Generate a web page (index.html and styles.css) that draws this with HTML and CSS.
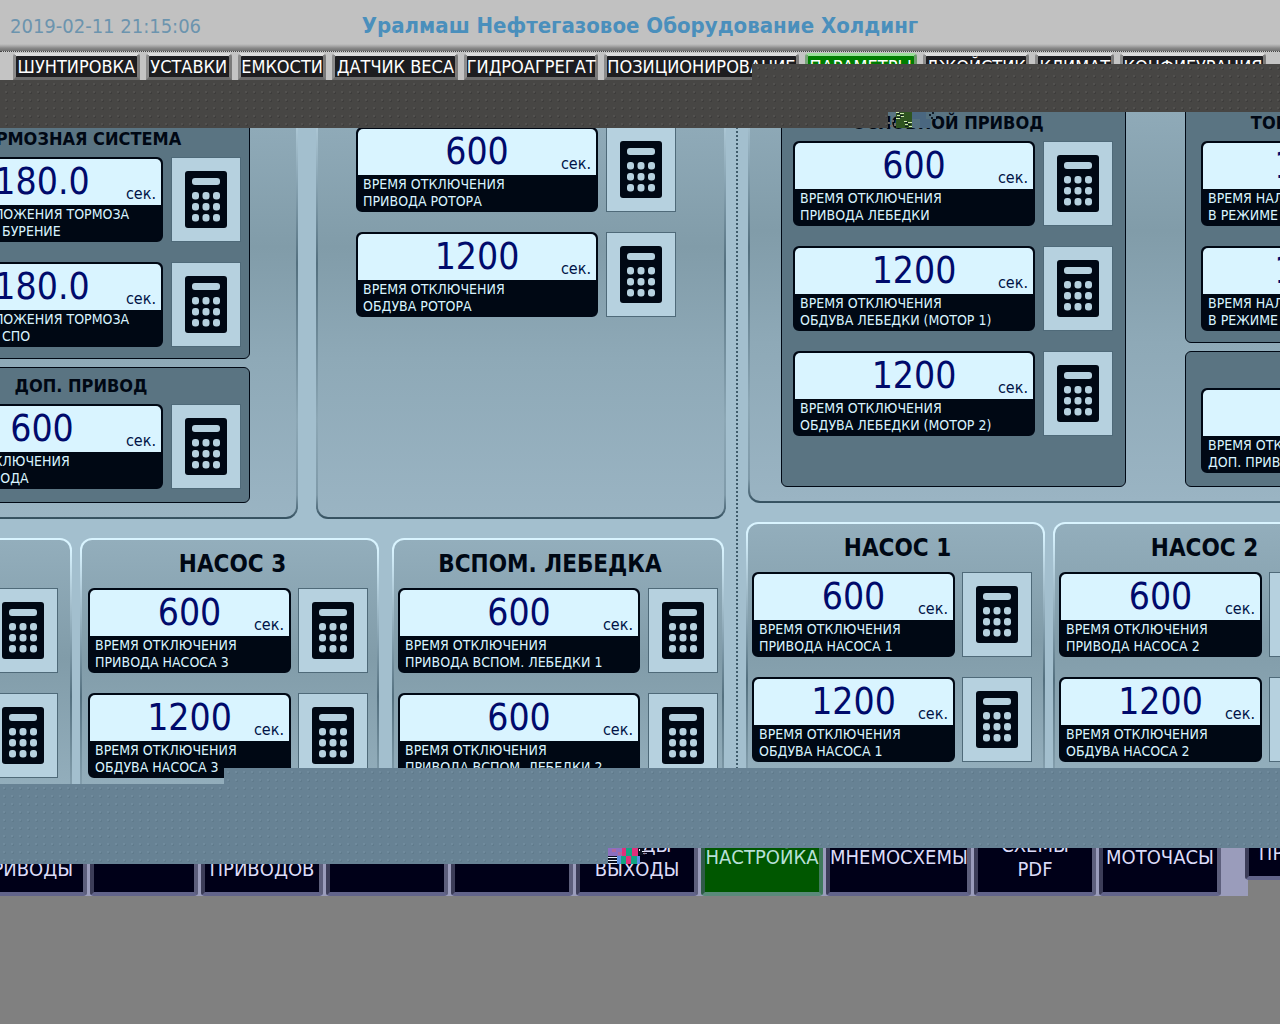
FILE: index.html
```html
<!DOCTYPE html>
<html lang="ru">
<head>
<meta charset="utf-8">
<title>Параметры</title>
<link rel="stylesheet" href="styles.css">
</head>
<body>
<svg class="defs" aria-hidden="true">
  <symbol id="calc" viewBox="0 0 42 57">
    <rect width="42" height="57" rx="3" fill="#000814"/>
    <g fill="#b6d1df">
      <rect x="7" y="7" width="28" height="7" rx="3"/>
      <rect x="7" y="21" width="7" height="7.5" rx="3"/><rect x="17.5" y="21" width="7" height="7.5" rx="3"/><rect x="28" y="21" width="7" height="7.5" rx="3"/>
      <rect x="7" y="32" width="7" height="7.5" rx="3"/><rect x="17.5" y="32" width="7" height="7.5" rx="3"/><rect x="28" y="32" width="7" height="7.5" rx="3"/>
      <rect x="7" y="43" width="7" height="7.5" rx="3"/><rect x="17.5" y="43" width="7" height="7.5" rx="3"/><rect x="28" y="43" width="7" height="7.5" rx="3"/>
    </g>
  </symbol>
</svg>

<header class="header">
  <time class="clock">2019-02-11 21:15:06</time>
  <h1 class="company">Уралмаш Нефтегазовое Оборудование Холдинг</h1>
</header>

<nav class="tabs">
  <button class="tab">ШУНТИРОВКА</button>
  <button class="tab">УСТАВКИ</button>
  <button class="tab">ЕМКОСТИ</button>
  <button class="tab">ДАТЧИК ВЕСА</button>
  <button class="tab">ГИДРОАГРЕГАТ</button>
  <button class="tab">ПОЗИЦИОНИРОВАНИЕ</button>
  <button class="tab active">ПАРАМЕТРЫ</button>
  <button class="tab">ДЖОЙСТИК</button>
  <button class="tab">КЛИМАТ</button>
  <button class="tab">КОНФИГУРАЦИЯ</button>
</nav>

<div class="band band-dark">
  <svg class="noise noise-top" viewBox="0 0 52 16" aria-hidden="true">
    <path fill="#6b6a66" d="M0 10h2v2H0zM4 8h2v2H4zM2 13h3v2H2zM6 11h2v3H6z"/>
    <path fill="#2f5520" d="M8 0h16v16H8z"/>
    <path fill="#4a6780" d="M24 0h14v7H24zM32 7h10v9H32z"/>
    <path fill="#54707f" d="M24 7h8v9h-8zM38 0h10v7H38z"/>
    <path fill="#cfe8b0" d="M8 0h3v1H8zM12 1h4v1h-4zM9 3h3v1H9zM13 4h3v1h-3zM8 6h4v1H8zM16 9h3v1h-3zM20 10h4v1h-4zM17 12h3v1h-3zM21 14h3v1h-3z"/>
    <path fill="#101c28" d="M9 1h3v1H9zM12 3h3v1h-3zM9 5h4v1H9zM17 10h3v1h-3zM20 12h3v1h-3zM17 14h3v1h-3zM41 2h2v2h-2zM44 0h2v2h-2zM43 5h2v2h-2z"/>
  </svg>
</div>

<main class="screens">
  <section class="screen screen-left">
    <div class="row row-top">
      <div class="group group-wide">
        <div class="column">
          <section class="unit unit-brake">
            <h3>ТОРМОЗНАЯ СИСТЕМА</h3>
            <div class="param">
              <div class="card"><output id="v1">180.0</output><span class="sec">сек.</span><label for="v1">ВРЕМЯ НАЛОЖЕНИЯ ТОРМОЗА<br>В РЕЖИМЕ БУРЕНИЕ</label></div>
              <button class="key" aria-label="Ввод"><svg><use href="#calc"/></svg></button>
            </div>
            <div class="param">
              <div class="card"><output id="v2">180.0</output><span class="sec">сек.</span><label for="v2">ВРЕМЯ НАЛОЖЕНИЯ ТОРМОЗА<br>В РЕЖИМЕ СПО</label></div>
              <button class="key" aria-label="Ввод"><svg><use href="#calc"/></svg></button>
            </div>
          </section>
          <section class="unit unit-aux">
            <h3>ДОП. ПРИВОД</h3>
            <div class="param">
              <div class="card"><output id="v3">600</output><span class="sec">сек.</span><label for="v3">ВРЕМЯ ОТКЛЮЧЕНИЯ<br>ДОП. ПРИВОДА</label></div>
              <button class="key" aria-label="Ввод"><svg><use href="#calc"/></svg></button>
            </div>
          </section>
        </div>
      </div>
      <div class="group group-rotor">
        <div class="param">
          <div class="card"><output id="v4">600</output><span class="sec">сек.</span><label for="v4">ВРЕМЯ ОТКЛЮЧЕНИЯ<br>ПРИВОДА РОТОРА</label></div>
          <button class="key" aria-label="Ввод"><svg><use href="#calc"/></svg></button>
        </div>
        <div class="param">
          <div class="card"><output id="v5">1200</output><span class="sec">сек.</span><label for="v5">ВРЕМЯ ОТКЛЮЧЕНИЯ<br>ОБДУВА РОТОРА</label></div>
          <button class="key" aria-label="Ввод"><svg><use href="#calc"/></svg></button>
        </div>
      </div>
    </div>
    <div class="row row-bottom">
      <section class="group pump pump-edge">
        <button class="key" aria-label="Ввод"><svg><use href="#calc"/></svg></button>
        <button class="key" aria-label="Ввод"><svg><use href="#calc"/></svg></button>
      </section>
      <section class="group pump">
        <h2>НАСОС 3</h2>
        <div class="param">
          <div class="card"><output id="v6">600</output><span class="sec">сек.</span><label for="v6">ВРЕМЯ ОТКЛЮЧЕНИЯ<br>ПРИВОДА НАСОСА 3</label></div>
          <button class="key" aria-label="Ввод"><svg><use href="#calc"/></svg></button>
        </div>
        <div class="param">
          <div class="card"><output id="v7">1200</output><span class="sec">сек.</span><label for="v7">ВРЕМЯ ОТКЛЮЧЕНИЯ<br>ОБДУВА НАСОСА 3</label></div>
          <button class="key" aria-label="Ввод"><svg><use href="#calc"/></svg></button>
        </div>
      </section>
      <section class="group winch">
        <h2>ВСПОМ. ЛЕБЕДКА</h2>
        <div class="param">
          <div class="card"><output id="v8">600</output><span class="sec">сек.</span><label for="v8">ВРЕМЯ ОТКЛЮЧЕНИЯ<br>ПРИВОДА ВСПОМ. ЛЕБЕДКИ 1</label></div>
          <button class="key" aria-label="Ввод"><svg><use href="#calc"/></svg></button>
        </div>
        <div class="param">
          <div class="card"><output id="v9">600</output><span class="sec">сек.</span><label for="v9">ВРЕМЯ ОТКЛЮЧЕНИЯ<br>ПРИВОДА ВСПОМ. ЛЕБЕДКИ 2</label></div>
          <button class="key" aria-label="Ввод"><svg><use href="#calc"/></svg></button>
        </div>
      </section>
    </div>
  </section>

  <section class="screen screen-right">
    <div class="row row-top">
      <div class="group group-wide">
        <section class="unit unit-main">
          <h3>ОСНОВНОЙ ПРИВОД</h3>
          <div class="param">
            <div class="card"><output id="v10">600</output><span class="sec">сек.</span><label for="v10">ВРЕМЯ ОТКЛЮЧЕНИЯ<br>ПРИВОДА ЛЕБЕДКИ</label></div>
            <button class="key" aria-label="Ввод"><svg><use href="#calc"/></svg></button>
          </div>
          <div class="param">
            <div class="card"><output id="v11">1200</output><span class="sec">сек.</span><label for="v11">ВРЕМЯ ОТКЛЮЧЕНИЯ<br>ОБДУВА ЛЕБЕДКИ (МОТОР 1)</label></div>
            <button class="key" aria-label="Ввод"><svg><use href="#calc"/></svg></button>
          </div>
          <div class="param">
            <div class="card"><output id="v12">1200</output><span class="sec">сек.</span><label for="v12">ВРЕМЯ ОТКЛЮЧЕНИЯ<br>ОБДУВА ЛЕБЕДКИ (МОТОР 2)</label></div>
            <button class="key" aria-label="Ввод"><svg><use href="#calc"/></svg></button>
          </div>
        </section>
        <div class="column">
          <section class="unit unit-brake">
            <h3>ТОРМОЗНАЯ СИСТЕМА</h3>
            <div class="param">
              <div class="card"><output id="v13">180.0</output><label for="v13">ВРЕМЯ НАЛОЖЕНИЯ ТОРМОЗА<br>В РЕЖИМЕ БУРЕНИЕ</label></div>
            </div>
            <div class="param">
              <div class="card"><output id="v14">180.0</output><label for="v14">ВРЕМЯ НАЛОЖЕНИЯ ТОРМОЗА<br>В РЕЖИМЕ СПО</label></div>
            </div>
          </section>
          <section class="unit unit-aux">
            <h3></h3>
            <div class="param">
              <div class="card"><output id="v15"></output><label for="v15">ВРЕМЯ ОТКЛЮЧЕНИЯ<br>ДОП. ПРИВОДА</label></div>
            </div>
          </section>
        </div>
      </div>
    </div>
    <div class="row row-bottom">
      <section class="group pump">
        <h2>НАСОС 1</h2>
        <div class="param">
          <div class="card"><output id="v16">600</output><span class="sec">сек.</span><label for="v16">ВРЕМЯ ОТКЛЮЧЕНИЯ<br>ПРИВОДА НАСОСА 1</label></div>
          <button class="key" aria-label="Ввод"><svg><use href="#calc"/></svg></button>
        </div>
        <div class="param">
          <div class="card"><output id="v17">1200</output><span class="sec">сек.</span><label for="v17">ВРЕМЯ ОТКЛЮЧЕНИЯ<br>ОБДУВА НАСОСА 1</label></div>
          <button class="key" aria-label="Ввод"><svg><use href="#calc"/></svg></button>
        </div>
      </section>
      <section class="group pump">
        <h2>НАСОС 2</h2>
        <div class="param">
          <div class="card"><output id="v18">600</output><span class="sec">сек.</span><label for="v18">ВРЕМЯ ОТКЛЮЧЕНИЯ<br>ПРИВОДА НАСОСА 2</label></div>
          <button class="key" aria-label="Ввод"></button>
        </div>
        <div class="param">
          <div class="card"><output id="v19">1200</output><span class="sec">сек.</span><label for="v19">ВРЕМЯ ОТКЛЮЧЕНИЯ<br>ОБДУВА НАСОСА 2</label></div>
          <button class="key" aria-label="Ввод"></button>
        </div>
      </section>
    </div>
  </section>
</main>

<div class="band band-blue">
  <svg class="noise noise-bottom" viewBox="0 0 40 16" aria-hidden="true">
    <path fill="#8b6fc0" d="M0 0h14v8H0z"/>
    <path fill="#b0689a" d="M4 1h4v3H4zM10 4h4v3h-4z"/>
    <path fill="#e0307c" d="M14 0h4v8h-4zM24 0h6v8h-6zM18 8h5v8h-5z"/>
    <path fill="#12a583" d="M18 0h6v8h-6zM12 8h6v8h-6zM23 8h6v8h-6z"/>
    <path fill="#0b1020" d="M0 8h9v8H0zM30 0h6v7h-6z"/>
    <path fill="#e8f0ff" d="M0 9h9v1H0zM0 12h9v1H0zM0 15h9v1H0zM31 1h1v2h-1zM34 3h2v1h-2z"/>
    <path fill="#5a8ee0" d="M9 8h4v8H9zM29 8h3v8h-3z"/>
    <path fill="#8f8fae" d="M36 2h3v1h-3zM35 5h4v1h-4z"/>
  </svg>
</div>

<nav class="menu">
  <button class="item">&nbsp;<br>ПРИВОДЫ</button>
  <button class="item" aria-label="Раздел"></button>
  <button class="item">&nbsp;<br>ПРИВОДОВ</button>
  <button class="item" aria-label="Раздел"></button>
  <button class="item" aria-label="Раздел"></button>
  <button class="item">ВХОДЫ<br>ВЫХОДЫ</button>
  <button class="item active">НАСТРОЙКА</button>
  <button class="item">МНЕМОСХЕМЫ</button>
  <button class="item">СХЕМЫ<br>PDF</button>
  <button class="item">МОТОЧАСЫ</button>
  <div class="menu-next"><button class="item">&nbsp;<br>ПРИВОДЫ</button></div>
</nav>
</body>
</html>
```
FILE: styles.css
```css
* { box-sizing: border-box; }

body {
  margin: 0;
  min-height: 100vh;
  background: #808080;
  font-family: "DejaVu Sans Condensed", "DejaVu Sans", sans-serif;
  color: #000814;
  overflow-x: hidden;
}

h1, h2, h3 { margin: 0; }

button {
  margin: 0;
  padding: 0;
  font: inherit;
  color: inherit;
  white-space: nowrap;
}

.defs { position: absolute; width: 0; height: 0; }

/* header */
.header {
  display: grid;
  grid-template-columns: 1fr auto 1fr;
  align-items: center;
  height: 51px;
  padding: 0 10px;
  background: linear-gradient(#c1c1c1 0 44px, #a8a8a8 46px, #8a8a8a 48px, #707070 51px);
}
.clock { font-size: 20px; line-height: 24px; color: #6c94ae; }
.company { font-size: 22px; line-height: 24px; color: #4a8fbc; }

/* tabs */
.tabs {
  display: grid;
  grid-template-columns: 127fr 86fr 89fr 126fr 134fr 195fr 112fr 107fr 79fr 146fr;
  gap: 6px;
  height: 29px;
  padding: 1px 14px 0 13px;
  border-top: 1px dotted #444;
  background: #c4c4c4;
}
.tab {
  display: flex;
  justify-content: center;
  align-items: center;
  min-width: 0;
  border: 3px solid;
  border-color: #dcdcdc #7a7a7a #6c6c6c #8c8c8c;
  border-radius: 4px 4px 0 0;
  background: #1d1d20;
  color: #fff;
  font-size: 18px;
  line-height: 20px;
}
.tab.active { background: #007d00; border-color: #9be09b #6a9a6a #6c6c6c #7aa67a; }

/* interference bands */
.band {
  position: relative;
  z-index: 2;
}
.band, .band::before, .band::after {
  background-size: 8px 8px;
}
.band::before, .band::after {
  content: "";
  position: absolute;
  height: 16px;
}
.band::before { top: -16px; right: 0; }
.band::after { bottom: -16px; left: 0; }
.band-dark { height: 32px; }
.band-dark, .band-dark::before, .band-dark::after {
  background-color: #474644;
  background-image: radial-gradient(circle at 6px 4px, #52514f 0 1px, transparent 1px), radial-gradient(circle at 7px 5px, #3e3d3c 0 1px, transparent 1px);
}
.band-dark::before { left: 752px; }
.band-dark::after { width: 888px; }
.band-blue { height: 64px; }
.band-blue, .band-blue::before, .band-blue::after {
  background-color: #678294;
  background-image: radial-gradient(circle at 4px 4px, #708b9d 0 1px, transparent 1px), radial-gradient(circle at 5px 5px, #607b8c 0 1px, transparent 1px);
}
.band-blue::before { left: 224px; }
.band-blue::after { width: 608px; }
.noise { position: absolute; height: 16px; }
.noise-top { left: 888px; bottom: -16px; width: 52px; }
.noise-bottom { left: 608px; bottom: -16px; width: 40px; }

/* screens */
.screens {
  display: grid;
  grid-template-columns: 736fr 544fr;
  height: 672px;
  background: #a3bfce;
}
.screen {
  display: flex;
  flex-direction: column;
  gap: 20px;
  min-width: 0;
  overflow: hidden;
}
.screen-left { padding-top: 8px; }
.screen-left .row { justify-content: flex-end; }
.screen-left .row-top { padding-right: 10px; }
.screen-left .row-bottom { padding-right: 12px; }
.screen-right { border-left: 2px dotted #405c6b; }
.screen-right .row-top { padding-left: 10px; margin-top: -8px; }
.screen-right .row-bottom { padding-left: 8px; }

.row { display: flex; flex: none; }
.row-top { height: 399px; gap: 18px; margin-bottom: -1px; }
.row-bottom { height: 264px; gap: 8px; }

.group {
  flex: none;
  border: 2px solid transparent;
  border-radius: 10px;
}
.row-top .group {
  border-top: 0;
  border-radius: 0 0 12px 12px;
  background:
    linear-gradient(#90abb9, #819ca9 32%, #8ea9b7 60%, #9ab4c3) padding-box,
    linear-gradient(#b0cbd9, #54707f 36%, #8ca7b5 75%, #7f9aa9 94%, #34505f) border-box;
}
.row-bottom .group {
  border-bottom: 0;
  border-radius: 12px 12px 0 0;
  background:
    linear-gradient(#93aebc, #819ca9 45%, #95b0be) padding-box,
    linear-gradient(#d9f4ff 4%, #b0cbd9 20%, #54707f 60%, #8ca7b5) border-box;
}

.group-wide {
  display: flex;
  align-items: flex-start;
  gap: 59px;
  padding: 0 46px 13px 31px;
}
.column { display: flex; flex-direction: column; gap: 8px; }
.group-rotor {
  width: 410px;
  padding: 7px 0 0 38px;
}
.pump { width: 299px; padding-left: 4px; }
.screen-left .pump { padding-left: 6px; }
.winch { width: 332px; padding-left: 4px; margin-left: 5px; }
.pump-edge {
  display: flex;
  flex-direction: column;
  align-items: flex-end;
  gap: 20px;
  padding: 48px 12px 0 0;
}

.unit {
  width: 345px;
  border: 1px solid #000814;
  border-radius: 6px;
  background: #5a7482;
}
.unit-main { height: 383px; padding: 0 0 0 11px; }
.unit-brake { padding: 0 0 11px 15px; }
.unit-aux { padding: 0 0 13px 15px; }
.unit h3 {
  height: 36px;
  font-size: 18px;
  line-height: 36px;
  text-align: center;
}
.unit-main h3 { padding-right: 22px; }
.unit-brake h3 { padding-right: 18px; }
.unit-aux h3 { padding-right: 8px; }
.group h2 {
  height: 48px;
  font-size: 24px;
  line-height: 48px;
  text-align: center;
}
.winch h2 { padding-right: 20px; }

/* parameter */
.param { display: flex; gap: 8px; }
.param + .param { margin-top: 20px; }
.pump .param { gap: 7px; }
.card {
  display: grid;
  grid-template-rows: 46px 35px;
  width: 242px;
  height: 85px;
  border: 2px solid #000814;
  border-radius: 6px;
  background: #000814;
}
.pump .card { width: 203px; }
.card output {
  grid-area: 1 / 1;
  border-radius: 5px 5px 0 0;
  background: #d9f4ff;
  color: #000a6b;
  font-size: 37px;
  line-height: 46px;
  text-align: center;
}
.card .sec {
  grid-area: 1 / 1;
  align-self: end;
  justify-self: end;
  padding: 0 5px 1px 0;
  color: #001246;
  font-size: 16px;
  line-height: 20px;
}
.card label {
  padding: 1px 0 0 5px;
  color: #d9f4ff;
  font-size: 14px;
  line-height: 17px;
  white-space: nowrap;
}
.key {
  display: flex;
  justify-content: center;
  align-items: center;
  flex: none;
  width: 70px;
  height: 85px;
  border: 1px solid #4f6a79;
  background: #b6d1df;
}
.key svg { width: 42px; height: 57px; }

/* bottom menu */
.menu {
  display: grid;
  grid-template-columns: 122fr 108fr 122fr 122fr 122fr 122fr 122fr 145fr 122fr 122fr 56fr;
  grid-template-rows: 48px;
  gap: 3px;
  align-items: end;
  height: 48px;
  margin-left: -35px;
  background: #9a9cbb;
  overflow: hidden;
}
.item {
  min-width: 0;
  height: 78px;
  border: 4px solid;
  border-color: #7d7fa0 #5d5f7c #62648a #3c3d58;
  border-radius: 4px;
  background: #000018;
  color: #dcdcf8;
  font-size: 20px;
  line-height: 24px;
}
.item.active { background: #005700; border-color: #4a8a6a #3f7a5c #5a8a7a #2f5a48; color: #b8e0d8; }
.menu-next {
  display: flex;
  align-items: flex-end;
  min-width: 0;
  height: 48px;
  padding: 0 0 16px 21px;
  background: linear-gradient(90deg, #9a9cbb 24px, #808080 24px);
}
.menu-next .item { flex: none; width: 122px; }
```
